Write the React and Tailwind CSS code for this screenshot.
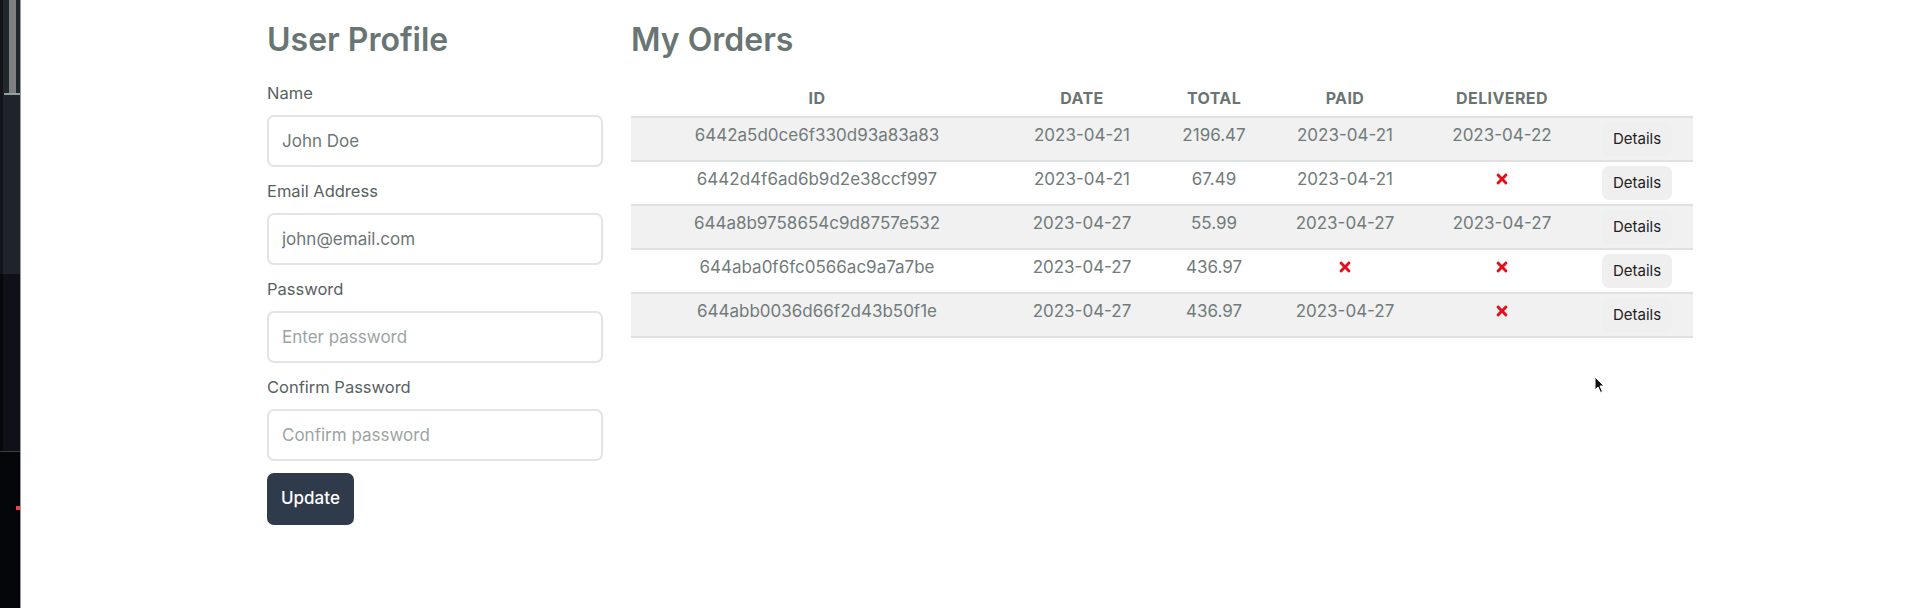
import React from "react";
import { FaTimes } from "react-icons/fa";

const orders = [
  { id: "6442a5d0ce6f330d93a83a83", date: "2023-04-21", total: "2196.47", paid: "2023-04-21", delivered: "2023-04-22" },
  { id: "6442d4f6ad6b9d2e38ccf997", date: "2023-04-21", total: "67.49", paid: "2023-04-21", delivered: null },
  { id: "644a8b9758654c9d8757e532", date: "2023-04-27", total: "55.99", paid: "2023-04-27", delivered: "2023-04-27" },
  { id: "644aba0f6fc0566ac9a7a7be", date: "2023-04-27", total: "436.97", paid: null, delivered: null },
  { id: "644abb0036d66f2d43b50f1e", date: "2023-04-27", total: "436.97", paid: "2023-04-27", delivered: null },
];

function Field({ label, value, placeholder, type = "text" }) {
  return (
    <div className="flex flex-col">
      <label className="text-[16.5px] leading-[24px] font-normal text-[#56625f] mb-[10px]">{label}</label>
      <input
        type={type}
        defaultValue={value}
        placeholder={placeholder}
        className="h-[52px] w-[336px] rounded-[7px] border-2 border-[#e1e5e5] bg-white px-[13px] text-[17px] text-[#6c7776] placeholder:text-[#9ba4a3] outline-none"
      />
    </div>
  );
}

function Cross() {
  return (
    <span className="inline-flex h-[24px] items-center justify-center text-[#e0101c]">
      <FaTimes size={16} />
    </span>
  );
}

function Strip() {
  return (
    <div className="flex shrink-0">
      <div className="flex w-[20px] flex-col">
        <div className="flex h-[93px]">
          <div className="w-[3px] bg-[#121419]" />
          <div className="w-[6px] bg-[#22262d]" />
          <div className="w-[7px] bg-[#7d7f80]" />
          <div className="w-[4px] bg-[#22262d]" />
        </div>
        <div className="flex h-[2px]">
          <div className="w-[4px] bg-[#121419]" />
          <div className="flex-1 bg-[#8fa3a3]" />
        </div>
        <div className="flex h-[179px]">
          <div className="w-[3px] bg-[#121419]" />
          <div className="flex-1 bg-[#1f232a]" />
        </div>
        <div className="flex h-[177px]">
          <div className="w-[3px] bg-[#07080b]" />
          <div className="flex-1 bg-[#0f1118]" />
        </div>
        <div className="h-[1px] bg-[#3a3d42]" />
        <div className="flex flex-1 flex-col bg-[#04060a] pt-[54px]">
          <div className="ml-[16px] h-[4px] w-[4px] bg-[#e8454a]" />
        </div>
      </div>
      <div className="w-[1px] bg-[#9a9a9a]" />
    </div>
  );
}

export default function App() {
  return (
    <div className="relative flex min-h-[608px] w-[1915px] bg-white font-['Inter',sans-serif]">
      <Strip />
      <div className="flex flex-1 gap-[28px] pl-[246px] pt-[20px]">
        <div className="flex w-[336px] flex-col">
          <h1 className="text-[32px] leading-[40px] font-semibold text-[#687573]">User Profile</h1>
          <div className="mt-[21px] flex flex-col gap-[12px]">
            <Field label="Name" value="John Doe" />
            <Field label="Email Address" value="john@email.com" />
            <Field label="Password" placeholder="Enter password" type="password" />
            <Field label="Confirm Password" placeholder="Confirm password" type="password" />
          </div>
          <div className="mt-[12px]">
            <button className="h-[52px] rounded-[7px] bg-[#2f3a4b] px-[14px] text-[17px] font-medium text-white">Update</button>
          </div>
        </div>
        <div className="flex flex-col">
          <h1 className="text-[32px] leading-[40px] font-semibold text-[#687573]">My Orders</h1>
          <table className="mt-[20px] w-[1062px] table-fixed border-collapse">
            <colgroup>
              <col className="w-[372px]" />
              <col className="w-[158px]" />
              <col className="w-[106px]" />
              <col className="w-[156px]" />
              <col className="w-[158px]" />
              <col className="w-[112px]" />
            </colgroup>
            <thead>
              <tr className="border-b-2 border-[#dfe2e2]">
                {["ID", "DATE", "TOTAL", "PAID", "DELIVERED", ""].map((h, i) => (
                  <th key={i} className="py-[6px] text-center text-[16px] leading-[24px] font-bold tracking-wide text-[#6a7573]">
                    {h}
                  </th>
                ))}
              </tr>
            </thead>
            <tbody>
              {orders.map((o, i) => (
                <tr key={o.id} className={`border-b-2 border-[#dfe2e2] ${i % 2 === 0 ? "bg-[#f1f1f1]" : "bg-white"}`}>
                  <td className="pt-[5px] text-center align-top text-[17px] leading-[24px] text-[#707b7a]">{o.id}</td>
                  <td className="pt-[5px] text-center align-top text-[17px] leading-[24px] text-[#707b7a]">{o.date}</td>
                  <td className="pt-[5px] text-center align-top text-[17px] leading-[24px] text-[#707b7a]">{o.total}</td>
                  <td className="pt-[5px] text-center align-top text-[17px] leading-[24px] text-[#707b7a]">{o.paid ? o.paid : <Cross />}</td>
                  <td className="pt-[5px] text-center align-top text-[17px] leading-[24px] text-[#707b7a]">{o.delivered ? o.delivered : <Cross />}</td>
                  <td className="py-[4px] text-center align-middle">
                    <button className="h-[34px] rounded-[7px] bg-[#efefef] px-[11px] text-[15px] font-normal text-[#222]">Details</button>
                  </td>
                </tr>
              ))}
            </tbody>
          </table>
        </div>
      </div>
      <svg className="absolute left-[1594px] top-[376px]" width="12" height="18" viewBox="0 0 12 18">
        <path d="M1 1 L1 14 L4 11 L6.5 16.5 L8.5 15.5 L6 10 L10 10 Z" fill="#111" stroke="#fff" strokeWidth="1" />
      </svg>
    </div>
  );
}
